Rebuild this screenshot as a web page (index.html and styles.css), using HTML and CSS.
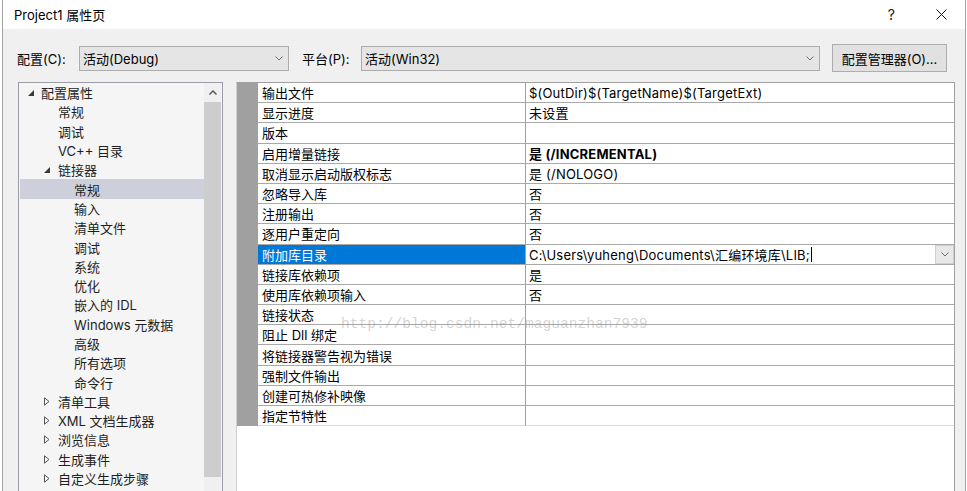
FILE: index.html
```html
<!DOCTYPE html>
<html lang="zh-CN">
<head>
<meta charset="utf-8">
<title>Project1 属性页</title>
<link rel="stylesheet" href="styles.css">
</head>
<body>
<div class="window">
  <div class="titlebar">
    <span class="title">Project1 属性页</span>
    <span class="help">?</span>
    <svg class="close" width="11" height="11" viewBox="0 0 11 11"><path d="M0.5 0.5 L10.5 10.5 M10.5 0.5 L0.5 10.5" stroke="#111" stroke-width="1" fill="none"/></svg>
  </div>
  <div class="content">
    <div class="toolbar">
      <span class="lbl">配置(C):</span>
      <div class="combo c1"><span>活动(Debug)</span><svg class="chev" width="8" height="5" viewBox="0 0 8 5"><path d="M0.5 0.5 L4 4 L7.5 0.5" stroke="#707070" fill="none"/></svg></div>
      <span class="lbl lbl2">平台(P):</span>
      <div class="combo c2"><span>活动(Win32)</span><svg class="chev" width="8" height="5" viewBox="0 0 8 5"><path d="M0.5 0.5 L4 4 L7.5 0.5" stroke="#707070" fill="none"/></svg></div>
      <button class="btn">配置管理器(O)...</button>
    </div>
    <div class="main">
      <div class="tree">
        <div class="items">
          <div class="ti l0x"><span class="arr a0"><svg width="6" height="6" viewBox="0 0 6 6"><path d="M6 0 L6 6 L0 6 Z" fill="#3a3a3a"/></svg></span>配置属性</div>
          <div class="ti l1">常规</div>
          <div class="ti l1">调试</div>
          <div class="ti l1">VC++ 目录</div>
          <div class="ti l1x"><span class="arr a1"><svg width="6" height="6" viewBox="0 0 6 6"><path d="M6 0 L6 6 L0 6 Z" fill="#3a3a3a"/></svg></span>链接器</div>
          <div class="ti l2 sel">常规</div>
          <div class="ti l2">输入</div>
          <div class="ti l2">清单文件</div>
          <div class="ti l2">调试</div>
          <div class="ti l2">系统</div>
          <div class="ti l2">优化</div>
          <div class="ti l2">嵌入的 IDL</div>
          <div class="ti l2">Windows 元数据</div>
          <div class="ti l2">高级</div>
          <div class="ti l2">所有选项</div>
          <div class="ti l2">命令行</div>
          <div class="ti l1x"><span class="arr a1"><svg width="6" height="9" viewBox="0 0 6 9"><path d="M0.5 0.8 L5 4.5 L0.5 8.2 Z" fill="none" stroke="#555" stroke-width="1"/></svg></span>清单工具</div>
          <div class="ti l1x"><span class="arr a1"><svg width="6" height="9" viewBox="0 0 6 9"><path d="M0.5 0.8 L5 4.5 L0.5 8.2 Z" fill="none" stroke="#555" stroke-width="1"/></svg></span>XML 文档生成器</div>
          <div class="ti l1x"><span class="arr a1"><svg width="6" height="9" viewBox="0 0 6 9"><path d="M0.5 0.8 L5 4.5 L0.5 8.2 Z" fill="none" stroke="#555" stroke-width="1"/></svg></span>浏览信息</div>
          <div class="ti l1x"><span class="arr a1"><svg width="6" height="9" viewBox="0 0 6 9"><path d="M0.5 0.8 L5 4.5 L0.5 8.2 Z" fill="none" stroke="#555" stroke-width="1"/></svg></span>生成事件</div>
          <div class="ti l1x"><span class="arr a1"><svg width="6" height="9" viewBox="0 0 6 9"><path d="M0.5 0.8 L5 4.5 L0.5 8.2 Z" fill="none" stroke="#555" stroke-width="1"/></svg></span>自定义生成步骤</div>
        </div>
        <div class="vscroll">
          <div class="up"><svg width="8" height="5" viewBox="0 0 8 5"><path d="M0.5 4.5 L4 1 L7.5 4.5" stroke="#505050" stroke-width="1.4" fill="none"/></svg></div>
          <div class="thumb"></div>
        </div>
      </div>
      <div class="grid">
        <div class="row"><div class="gut"></div><div class="name">输出文件</div><div class="val">$(OutDir)$(TargetName)$(TargetExt)</div></div>
        <div class="row"><div class="gut"></div><div class="name">显示进度</div><div class="val">未设置</div></div>
        <div class="row"><div class="gut"></div><div class="name">版本</div><div class="val"></div></div>
        <div class="row"><div class="gut"></div><div class="name">启用增量链接</div><div class="val bold">是 (/INCREMENTAL)</div></div>
        <div class="row"><div class="gut"></div><div class="name">取消显示启动版权标志</div><div class="val">是 (/NOLOGO)</div></div>
        <div class="row"><div class="gut"></div><div class="name">忽略导入库</div><div class="val">否</div></div>
        <div class="row"><div class="gut"></div><div class="name">注册输出</div><div class="val">否</div></div>
        <div class="row"><div class="gut"></div><div class="name">逐用户重定向</div><div class="val">否</div></div>
        <div class="row selrow"><div class="gut"></div><div class="name">附加库目录</div><div class="val"><span>C:\Users\yuheng\Documents\汇编环境库\LIB;</span><span class="caret"></span><span class="ddbtn"><svg width="8" height="5" viewBox="0 0 8 5"><path d="M0.5 0.5 L4 4 L7.5 0.5" stroke="#707070" fill="none"/></svg></span></div></div>
        <div class="row"><div class="gut"></div><div class="name">链接库依赖项</div><div class="val">是</div></div>
        <div class="row"><div class="gut"></div><div class="name">使用库依赖项输入</div><div class="val">否</div></div>
        <div class="row"><div class="gut"></div><div class="name">链接状态</div><div class="val"></div></div>
        <div class="row"><div class="gut"></div><div class="name">阻止 Dll 绑定</div><div class="val"></div></div>
        <div class="row"><div class="gut"></div><div class="name">将链接器警告视为错误</div><div class="val"></div></div>
        <div class="row"><div class="gut"></div><div class="name">强制文件输出</div><div class="val"></div></div>
        <div class="row"><div class="gut"></div><div class="name">创建可热修补映像</div><div class="val"></div></div>
        <div class="row last"><div class="gut"></div><div class="name">指定节特性</div><div class="val"></div></div>
        <div class="watermark">http://blog.csdn.net/maguanzhan7939</div>
      </div>
    </div>
  </div>
</div>
</body>
</html>
```
FILE: styles.css
```css
* { box-sizing: border-box; }
html, body { margin: 0; padding: 0; background: #fff; overflow: hidden; }
body {
  width: 967px; height: 491px;
  font-family: Inter, "Noto Sans CJK SC", sans-serif;
  font-size: 13px; color: #1b1b1b;
}
.window {
  margin-left: 2px; width: 964px; height: 491px;
  border-left: 1px solid #a3a3a3; border-right: 1px solid #a3a3a3;
  background: #f0f0f0; display: flex; flex-direction: column; overflow: hidden;
}
.titlebar {
  height: 29px; background: #fff; display: flex; align-items: center;
  padding-left: 11px; flex: none;
}
.title { flex: 1; color: #000; }
.help { font-size: 14px; color: #111; margin-right: 41px; }
.close { margin-right: 18px; }
.content { flex: 1; display: flex; flex-direction: column; min-height: 0; }
.toolbar {
  display: flex; align-items: center; height: 28px; margin-top: 15px;
  padding-left: 14px; flex: none;
}
.lbl { width: 62px; color: #000; }
.lbl2 { margin-left: 13px; width: 59px; }
.combo {
  height: 25px; border: 1px solid #adadad; background: #e5e5e5;
  display: flex; align-items: center; justify-content: space-between;
  padding: 0 5px 0 3px; color: #000;
}
.c1 { width: 210px; }
.c2 { width: 459px; }
.btn {
  margin-left: 12px; width: 115px; height: 28px; border: 1px solid #adadad;
  background: #e1e1e1; font: inherit; color: #000; padding: 0;
}
.main {
  display: flex; margin-top: 10px; padding-left: 15px; gap: 13px;
  flex: 1; min-height: 0;
}
.tree {
  width: 205px; height: 420px; flex: none;
  border: 1px solid #9c9ca8; background: #f5f5f5;
  display: flex; padding: 0 1px 0 0;
}
.items { flex: 1; padding-top: 0; }
.ti { height: 19.3px; display: flex; align-items: center; white-space: nowrap; color: #1e1e1e; }
.ti.sel { background: #cdd0da; margin-left: 1px; padding-left: 54px; }
.l0x { padding-left: 9px; }
.l1 { padding-left: 39px; }
.l1x { padding-left: 25px; }
.l2 { padding-left: 55px; }
.arr { display: flex; align-items: center; }
.a0 { width: 13px; }
.a1 { width: 14px; }
.vscroll { width: 17px; background: #f0f0f0; display: flex; flex-direction: column; }
.up { height: 19px; display: flex; align-items: center; justify-content: center; }
.thumb { height: 375px; background: #cdcdcd; }
.grid {
  position: relative; width: 719px; height: 420px; flex: none;
  background: #fff; border: 1px solid #a0a0a0; border-left-color: #d0d0d0;
}
.row { display: flex; height: 20.2px; }
.gut { width: 21px; background: #a0a0a0; flex: none; }
.name {
  width: 268px; flex: none; border-right: 1px solid #a0a0a0; border-bottom: 1px solid #a9a9a9;
  padding-left: 4px; display: flex; align-items: center; color: #000; white-space: nowrap;
}
.val {
  flex: 1; border-bottom: 1px solid #a9a9a9; padding-left: 3px; letter-spacing: 0.2px;
  display: flex; align-items: center; color: #000; white-space: nowrap;
}
.last .name, .last .val { border-bottom-color: #d8d8d8; }
.bold { font-weight: 700; }
.selrow .name { background: #0078d7; color: #fff; }
.caret { width: 1px; height: 15px; background: #000; margin-left: 1px; }
.ddbtn {
  margin-left: auto; width: 19px; height: 19px; background: #e8e8e8;
  border: 1px solid #cfcfcf; display: flex; align-items: center; justify-content: center;
  align-self: flex-start;
}
.watermark {
  position: absolute; left: 104px; top: 233px;
  font-family: "Liberation Mono", monospace; font-size: 14.6px;
  color: rgba(150, 150, 150, 0.42); white-space: nowrap; pointer-events: none;
}
```
